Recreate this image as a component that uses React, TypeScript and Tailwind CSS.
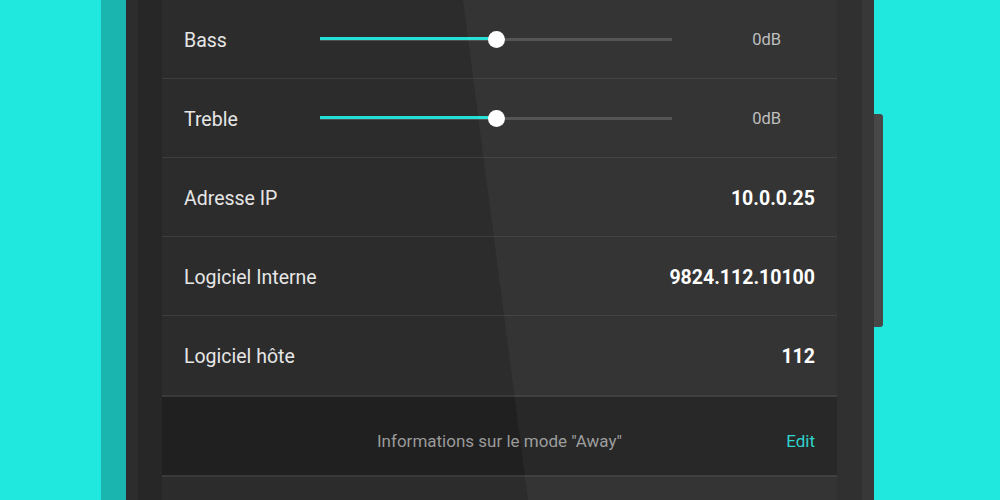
import React from "react";

const Slider = ({ pct }: { pct: number }) => (
  <div className="relative w-[352px] h-[18px] flex items-center">
    <div className="h-[3px] w-full bg-[#4f4f4f]" />
    <div className="absolute left-0 top-[7px] h-[3px] bg-[#22e0d6]" style={{ width: `${pct}%` }} />
    <div
      className="absolute top-[1px] w-[17px] h-[17px] rounded-full bg-white"
      style={{ left: `calc(${pct}% - 8px)` }}
    />
  </div>
);

const SliderRow = ({ label }: { label: string }) => (
  <div className="h-[79px] flex items-center pl-[22px] pr-[22px] border-b border-[#3d3d3d]">
    <div className="w-[136px] mt-[3px] text-[19.5px] text-[#e6e6e6]">{label}</div>
    <Slider pct={50} />
    <div className="flex-1 mt-[3px] text-right pr-[34px] text-[16.5px] text-[#bdbdbd]">0dB</div>
  </div>
);

const InfoRow = ({ label, value, border = true }: { label: string; value: string; border?: boolean }) => (
  <div className={`h-[79px] flex items-center justify-between px-[22px] pt-[3px] ${border ? "border-b border-[#3d3d3d]" : ""}`}>
    <div className="text-[19.5px] text-[#e6e6e6]">{label}</div>
    <div className="text-[19.5px] font-bold text-white">{value}</div>
  </div>
);

export default function App() {
  return (
    <div
      className="w-[1000px] h-[500px] overflow-hidden bg-[#20e8df] flex"
      style={{ fontFamily: "Roboto, 'Noto Sans', sans-serif" }}
    >
      <div className="w-[101px] shrink-0" />
      <div className="w-[25px] shrink-0 bg-[#1ab5ae]" />
      <div className="relative w-[748px] shrink-0 flex bg-[#2c2c2c]">
        <div className="w-[12px] shrink-0 bg-[#2d2d2d]" />
        <div className="w-[24px] shrink-0 bg-[#272727]" />
        <div className="w-[675px] shrink-0 flex flex-col bg-[#2c2c2c]">
          <SliderRow label="Bass" />
          <SliderRow label="Treble" />
          <InfoRow label="Adresse IP" value="10.0.0.25" />
          <InfoRow label="Logiciel Interne" value="9824.112.10100" />
          <InfoRow label="Logiciel hôte" value="112" border={false} />
          <div className="h-[82px] border-y-2 border-[#393939] bg-[#202020] flex items-center pt-[11px] px-[22px] relative">
            <div className="flex-1 text-center text-[17px] text-[#9a9a9a]">Informations sur le mode "Away"</div>
            <div className="absolute right-[22px] text-[17px] text-[#26d3cb]">Edit</div>
          </div>
          <div className="flex-1" />
        </div>
        <div className="w-[25px] shrink-0 bg-[#282828]" />
        <div className="w-[12px] shrink-0 bg-[#303030]" />
        <div
          className="absolute inset-0 pointer-events-none bg-white/[0.04]"
          style={{ clipPath: "polygon(337px 0, 100% 0, 100% 100%, 402px 100%)" }}
        />
      </div>
      <div className="pt-[114px]">
        <div className="w-[9px] h-[213px] bg-[#474747] rounded-r-[3px]" />
      </div>
    </div>
  );
}
